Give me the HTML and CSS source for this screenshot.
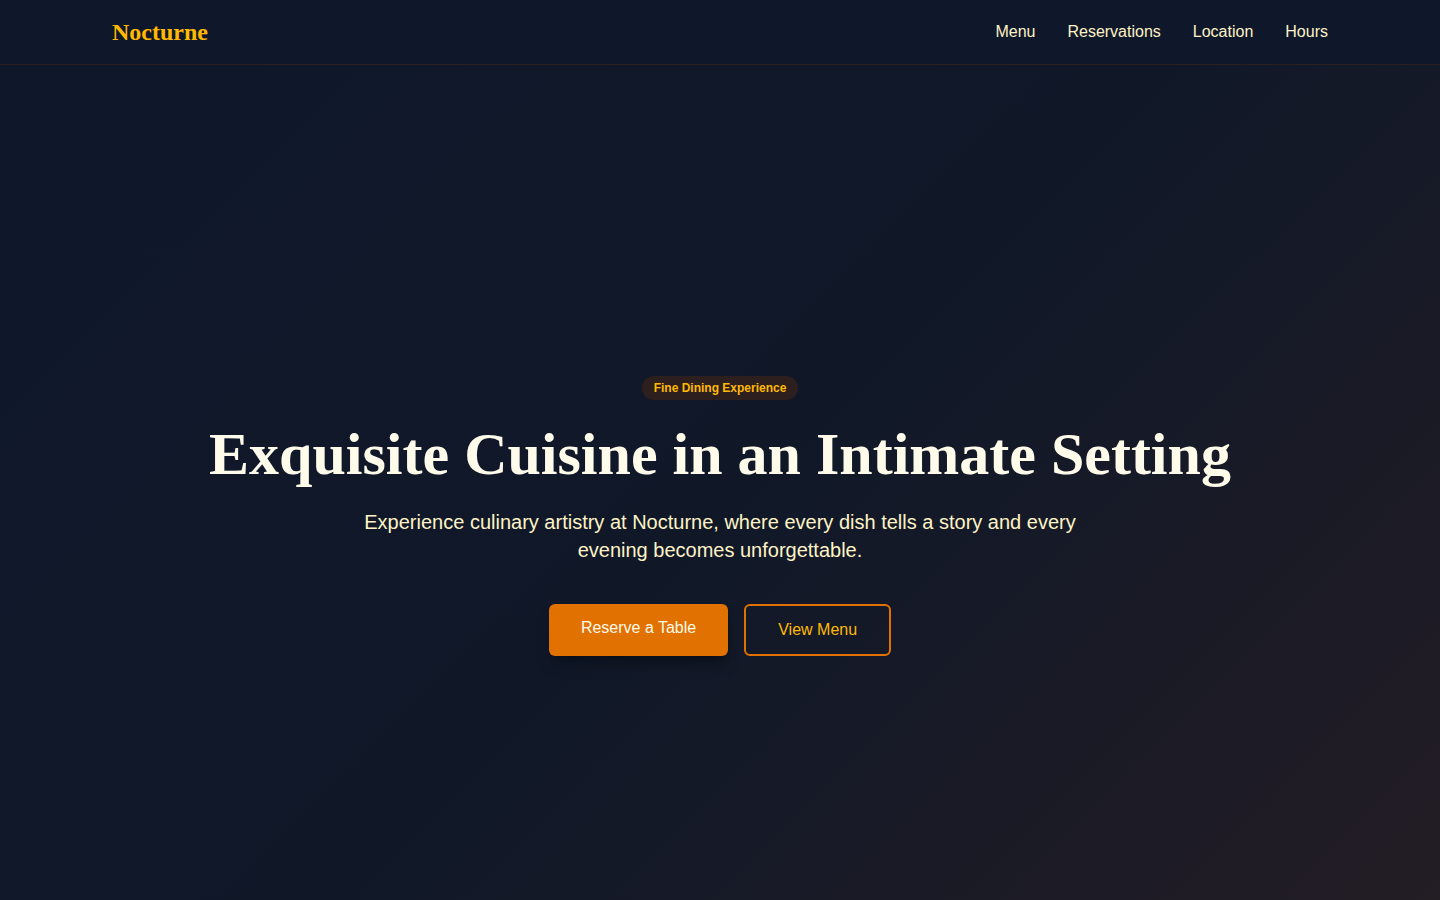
FILE: index.html
```html
<!DOCTYPE html>
<html lang="en">
<head>
<meta charset="utf-8">
<title>Nocturne</title>
<link rel="stylesheet" href="styles.css">
</head>
<body>
<header class="site-header">
  <div class="container header-inner">
    <a class="logo" href="#">Nocturne</a>
    <nav class="nav">
      <a href="#">Menu</a>
      <a href="#">Reservations</a>
      <a href="#">Location</a>
      <a href="#">Hours</a>
    </nav>
  </div>
</header>
<main class="hero">
  <div class="hero-content">
    <span class="badge">Fine Dining Experience</span>
    <h1 class="hero-title">Exquisite Cuisine in an Intimate Setting</h1>
    <p class="hero-text">Experience culinary artistry at Nocturne, where every dish tells a story and every evening becomes unforgettable.</p>
    <div class="actions">
      <a class="btn btn-primary" href="#">Reserve a Table</a>
      <a class="btn btn-outline" href="#">View Menu</a>
    </div>
  </div>
</main>
</body>
</html>
```

FILE: styles.css
```css
* { box-sizing: border-box; }
html, body { margin: 0; padding: 0; }
body {
  background: #0f172b;
  font-family: "Liberation Sans", Arial, sans-serif;
  color: #fef3c6;
}
a { text-decoration: none; color: inherit; }

.site-header {
  background: #0f172b;
  border-bottom: 1px solid #2a1f1c;
}
.container {
  max-width: 1280px;
  margin: 0 auto;
  padding: 0 32px;
}
.header-inner {
  height: 64px;
  display: flex;
  align-items: center;
  justify-content: space-between;
}
.logo {
  font-family: "Liberation Serif", "Times New Roman", serif;
  font-weight: 700;
  font-size: 24px;
  color: #ffb900;
}
.nav {
  display: flex;
  gap: 32px;
  font-size: 16px;
  line-height: 24px;
  color: #fef3c6;
}

.hero {
  min-height: 100vh;
  display: flex;
  align-items: center;
  justify-content: center;
  background: linear-gradient(135deg, #0f172b 0%, #101828 50%, #241d24 100%);
  text-align: center;
  padding: 2px 24px 0;
}
.hero-content {
  display: flex;
  flex-direction: column;
  align-items: center;
}
.badge {
  display: inline-block;
  padding: 4px 12px;
  border-radius: 9999px;
  background: #2c1f1d;
  color: #ffb900;
  font-size: 12px;
  line-height: 16px;
  font-weight: 700;
  margin-bottom: 24px;
}
.hero-title {
  margin: 0 0 24px;
  font-family: "Liberation Serif", "Times New Roman", serif;
  font-weight: 700;
  font-size: 60px;
  line-height: 60px;
  color: #fffbeb;
}
.hero-text {
  margin: 0 0 40px;
  max-width: 768px;
  font-size: 20px;
  line-height: 28px;
  color: #fef3c6;
}
.actions {
  display: flex;
  gap: 16px;
}
.btn {
  display: inline-block;
  font-size: 16px;
  line-height: 24px;
  border-radius: 6px;
}
.btn-primary {
  background: #e17100;
  color: #fffbeb;
  padding: 12px 32px 16px;
  box-shadow: 0 10px 15px -3px rgba(0, 0, 0, 0.3), 0 4px 6px -4px rgba(0, 0, 0, 0.3);
}
.btn-outline {
  border: 2px solid #e17100;
  color: #ffb900;
  padding: 12px 32px;
}
```
